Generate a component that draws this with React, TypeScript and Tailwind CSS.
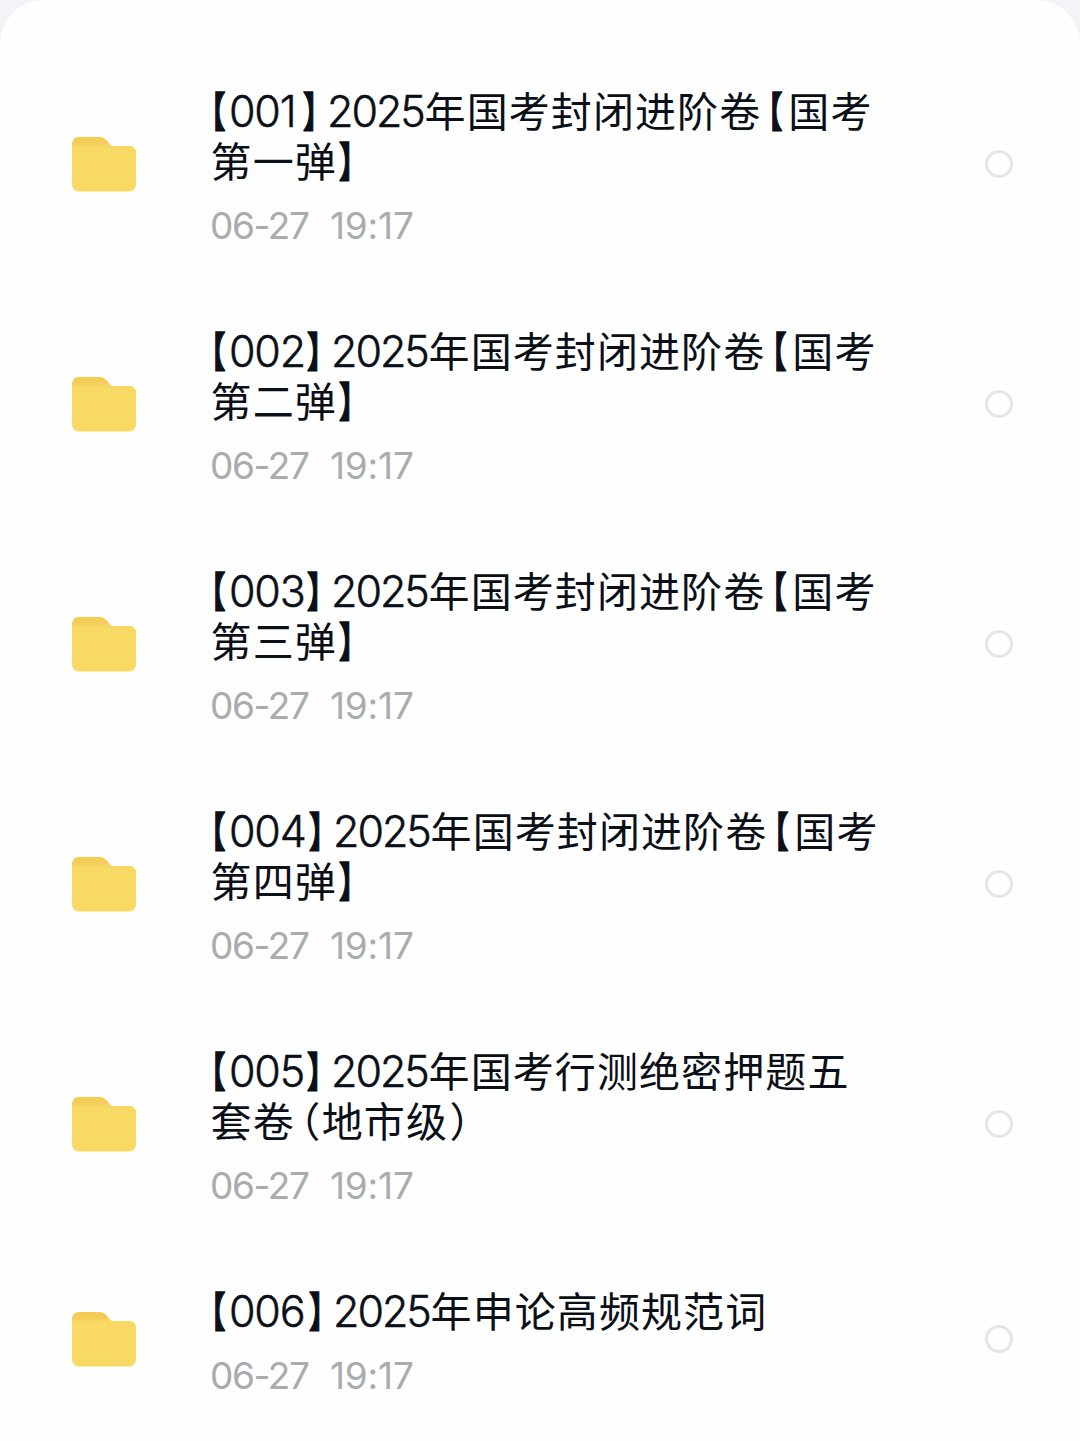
import clsx from "clsx";

interface FolderItem {
  code: string;
  codeClass: string;
  year: string;
  lines: string[];
  date: string;
  time: string;
}

const folders: FolderItem[] = [
  { code: "001", codeClass: "w-[74px]", year: "2025", lines: ["年国考封闭进阶卷【国考", "第一弹】"], date: "06-27", time: "19:17" },
  { code: "002", codeClass: "w-[78px]", year: "2025", lines: ["年国考封闭进阶卷【国考", "第二弹】"], date: "06-27", time: "19:17" },
  { code: "003", codeClass: "w-[78px]", year: "2025", lines: ["年国考封闭进阶卷【国考", "第三弹】"], date: "06-27", time: "19:17" },
  { code: "004", codeClass: "w-[80px]", year: "2025", lines: ["年国考封闭进阶卷【国考", "第四弹】"], date: "06-27", time: "19:17" },
  { code: "005", codeClass: "w-[78px]", year: "2025", lines: ["年国考行测绝密押题五", "套卷（地市级）"], date: "06-27", time: "19:17" },
  { code: "006", codeClass: "w-[80px]", year: "2025", lines: ["年申论高频规范词"], date: "06-27", time: "19:17" },
];

// Full-width punctuation is set tighter than its one-em box.
const punctuation: Record<string, string> = {
  "【": "w-[27px] justify-end pr-[5px]",
  "】": "w-[24px] justify-start pl-[3px]",
  "（": "w-[27px] justify-end pr-px",
  "）": "w-[24px] justify-start pl-[2px]",
};

const Char = ({ char }: { char: string }) => (
  <span
    className={clsx(
      "inline-block",
      char === "【" && "origin-right scale-x-70 font-bold [-webkit-text-stroke:1.4px]",
      char === "】" && "origin-left scale-x-70 font-bold [-webkit-text-stroke:1.4px]",
    )}
  >
    {char}
  </span>
);

const Glyphs = ({ text }: { text: string }) => (
  <>
    {Array.from(text).map((char, index) => (
      <span
        key={index}
        className={clsx("flex shrink-0", punctuation[char] ?? "w-[42.1px] justify-center")}
      >
        <Char char={char} />
      </span>
    ))}
  </>
);

const FolderIcon = () => (
  <svg width="66" height="58" viewBox="0 0 66 58" className="shrink-0">
    <defs>
      <linearGradient id="folder-fill" x1="0" y1="0" x2="0" y2="1">
        <stop offset="0" stopColor="#f5cb57" />
        <stop offset="0.1" stopColor="#f5cc58" />
        <stop offset="0.19" stopColor="#f8d964" />
      </linearGradient>
    </defs>
    <path
      d="M1 8.500a6.500 6.500 0 0 1 6.500-6.500H28c4 0 6.500 1.500 9 5 1.500 2.500 3 4 5.500 4H58.500a6.500 6.500 0 0 1 6.500 6.500v32.500a6.500 6.500 0 0 1-6.500 6.500H7.500a6.500 6.500 0 0 1-6.500-6.500z"
      fill="url(#folder-fill)"
    />
    <path d="M41 11H58.500a6.500 6.500 0 0 1 6.500 6.500V22H36z" fill="#f8d964" />
  </svg>
);

const FolderRow = ({ item }: { item: FolderItem }) => (
  <li className="flex items-center">
    <FolderIcon />
    <div className="ml-[73px] flex-1">
      <h2 className="-mt-[2px] font-['Noto_Sans_CJK_SC',sans-serif] text-[41px] leading-[50px] text-[#0b0f17] [font-feature-settings:'halt']">
        <span className="flex h-[50px]">
          <span className="flex w-[15px] shrink-0 justify-end">
            <Char char="【" />
          </span>
          <span className={clsx("ml-[4px] -mr-px shrink-0 pt-[2px] font-['Inter',sans-serif] text-[43px] font-light tracking-[-1.2px] [-webkit-text-stroke:0.5px]", item.codeClass)}>
            {item.code}
          </span>
          <span className="ml-px flex w-[24px] shrink-0">
            <Char char="】" />
          </span>
          <span className="w-[97px] shrink-0 pt-[2px] font-['Inter',sans-serif] text-[43px] font-light tracking-[-2px] [-webkit-text-stroke:0.5px]">
            {item.year}
          </span>
          <Glyphs text={item.lines[0]} />
        </span>
        {item.lines.slice(1).map((line) => (
          <span key={line} className="flex h-[50px]">
            <Glyphs text={line} />
          </span>
        ))}
      </h2>
      <p className="mt-[25px] flex h-[34px] font-['Inter',sans-serif] text-[37px] leading-[34px] text-[#a9acaf]">
        <span className="w-[120px] tracking-[-1.4px]">{item.date}</span>
        <span className="tracking-[-0.2px]">{item.time}</span>
      </p>
    </div>
    <span className="size-7 shrink-0 rounded-full border-[3px] border-[#e5e5e5]" />
  </li>
);

export default function App() {
  return (
    <div className="h-[1441px] overflow-hidden bg-[#f3f4f8]">
      <main className="h-full rounded-t-[44px] bg-[#fefefe] pt-[85.5px] pr-[67px] pl-[71px]">
        <ul className="flex flex-col gap-[83px]">
          {folders.map((item) => (
            <FolderRow key={item.code} item={item} />
          ))}
        </ul>
      </main>
    </div>
  );
}
